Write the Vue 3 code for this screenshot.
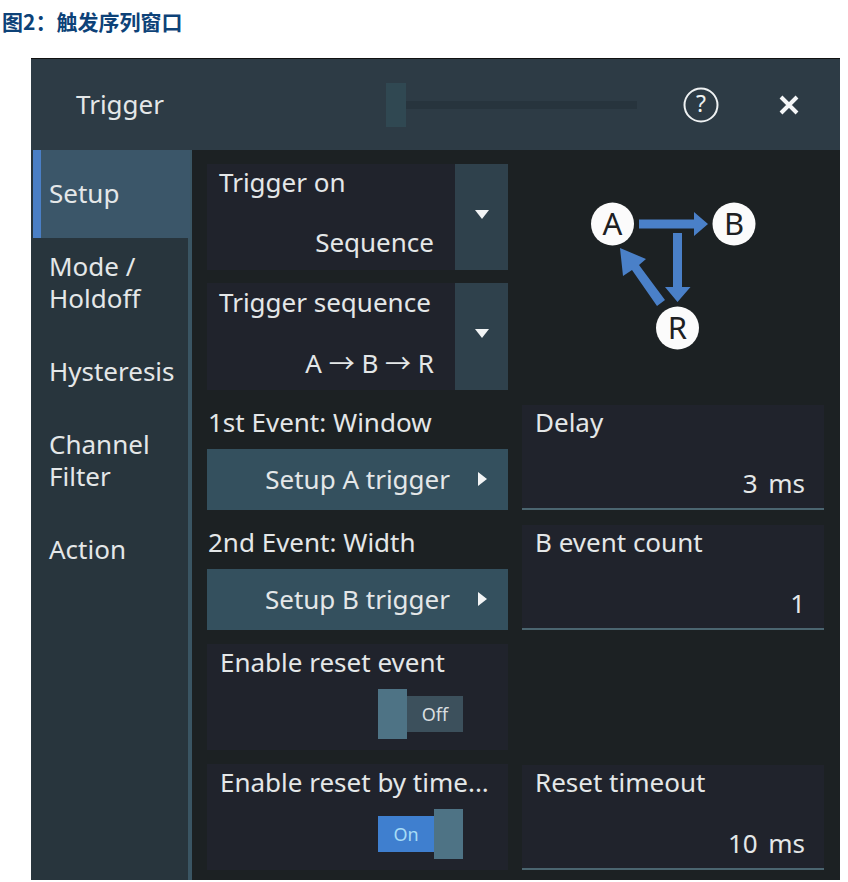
<template>
  <div class="page">
    <div class="caption">图2：触发序列窗口</div>
    <div class="window">
      <div class="header">
        <div class="title">Trigger</div>
        <div class="slider">
          <div class="slider_thumb"></div>
          <div class="slider_track"></div>
        </div>
        <svg class="help" width="36" height="36" viewBox="0 0 36 36">
          <circle cx="18" cy="18" r="16.5" fill="none" stroke="#eef1f2" stroke-width="2" />
          <text x="18" y="25" text-anchor="middle" class="help_mark">?</text>
        </svg>
        <svg class="close" width="22" height="22" viewBox="0 0 22 22">
          <path d="M3 3 L19 19 M19 3 L3 19" stroke="#f4f6f7" stroke-width="4" fill="none" />
        </svg>
      </div>
      <div class="content">
        <div class="sidebar">
          <div v-for="item in menu" :key="item" class="menu_item" :class="{ active: item === 'Setup' }">{{ item }}</div>
        </div>
        <div class="main">
          <div class="column">
            <div class="select first">
              <div class="select_text">
                <div class="label">Trigger on</div>
                <div class="value">Sequence</div>
              </div>
              <div class="select_btn"><span class="tri_down"></span></div>
            </div>
            <div class="select second">
              <div class="select_text">
                <div class="label">Trigger sequence</div>
                <div class="value">A → B → R</div>
              </div>
              <div class="select_btn"><span class="tri_down"></span></div>
            </div>
            <div class="event_label">1st Event: Window</div>
            <div class="action_btn">Setup A trigger<span class="tri_right"></span></div>
            <div class="event_label">2nd Event: Width</div>
            <div class="action_btn">Setup B trigger<span class="tri_right"></span></div>
            <div class="toggle_card">
              <div class="label">Enable reset event</div>
              <div class="toggle off">
                <div class="thumb"></div>
                <div class="track">Off</div>
              </div>
            </div>
            <div class="toggle_card">
              <div class="label">Enable reset by time...</div>
              <div class="toggle on">
                <div class="track">On</div>
                <div class="thumb"></div>
              </div>
            </div>
          </div>
          <div class="column right">
            <svg class="diagram" width="302" height="226" viewBox="522 164 302 226">
              <g fill="#4a80c8">
                <path d="M639 219.500 H694 V212 L708 224 L694 236 V228.500 H639 Z" />
                <path d="M673 233 H682 V287 H690.500 L677.500 302 L665 287 H673 Z" />
                <path d="M665 300 L657 306 L632 270 L623 276 L620 248 L646 259 L639 265 Z" />
              </g>
              <g v-for="n in nodes" :key="n.name">
                <circle :cx="n.x" :cy="n.y" r="21.500" fill="#fbfbfb" />
                <text :x="n.x" :y="n.y + 11" text-anchor="middle" class="node_text">{{ n.name }}</text>
              </g>
            </svg>
            <div class="field">
              <div class="label">Delay</div>
              <div class="value">3&nbsp; ms</div>
            </div>
            <div class="field">
              <div class="label">B event count</div>
              <div class="value">1</div>
            </div>
            <div class="field timeout">
              <div class="label">Reset timeout</div>
              <div class="value">10&nbsp; ms</div>
            </div>
          </div>
        </div>
      </div>
    </div>
  </div>
</template>

<script setup>
const menu = ["Setup", "Mode /\nHoldoff", "Hysteresis", "Channel\nFilter", "Action"];

const nodes = [
  { name: "A", x: 612.5, y: 224 },
  { name: "B", x: 734, y: 224 },
  { name: "R", x: 677.5, y: 328 }
];
</script>

<style>
html, body {
  margin: 0;
  background: #fff;
}
</style>

<style scoped>
.page {
  width: 848px;
  height: 882px;
  overflow: hidden;
  font-family: "Noto Sans", "Noto Sans CJK SC", sans-serif;
  box-sizing: border-box;
  padding-top: 9px;
}

.caption {
  height: 49px;
  padding-left: 2px;
  font-size: 21px;
  line-height: 24px;
  font-weight: 700;
  color: #0d4278;
  font-family: "Noto Sans CJK SC", sans-serif;
}

.window {
  width: 809px;
  height: 822px;
  margin-left: 31px;
  background: #1c2123;
  border-top: 1px solid #111;
  box-sizing: border-box;
  color: #e4e7e8;
  font-size: 26px;
  line-height: 32px;
}

.header {
  height: 91px;
  display: flex;
  align-items: center;
  background: #2d3b45;
}

.title {
  width: 355px;
  padding: 0 0 2px 45px;
  box-sizing: border-box;
}

.slider {
  width: 251px;
  height: 44px;
  display: flex;
  align-items: center;
}

.slider_thumb {
  width: 20px;
  height: 44px;
  background: #304852;
}

.slider_track {
  flex: 1;
  height: 8px;
  background: #27343d;
}

.help {
  margin-left: 46px;
}

.close {
  margin-left: 59px;
}

.content {
  display: flex;
  height: 730px;
}

.sidebar {
  width: 161px;
  flex-shrink: 0;
  box-sizing: border-box;
  background: #28353d;
  border-right: 4px solid #3a5563;
}

.menu_item {
  height: 89px;
  display: flex;
  align-items: center;
  padding: 0 0 2px 18px;
  white-space: pre-line;
  box-sizing: border-box;
}

.menu_item.active {
  height: 88px;
  margin-left: 2px;
  margin-right: -2px;
  padding-left: 8px;
  border-left: 8px solid #4a7fc6;
  background: #3b5669;
}

.main {
  flex: 1;
  display: flex;
  gap: 14px;
  padding: 14px 0 0 15px;
}

.column {
  width: 301px;
  display: flex;
  flex-direction: column;
}

.column.right {
  width: 302px;
}

.select {
  display: flex;
  height: 106px;
}

.second {
  height: 107px;
  margin-top: 13px;
}

.select_text {
  flex: 1;
  background: #20232c;
  padding: 2px 21px 0 12px;
  display: flex;
  flex-direction: column;
  justify-content: flex-start;
}

.second .select_text {
  padding-top: 3px;
}

.label {
  height: 32px;
  white-space: nowrap;
}

.select_text .value {
  margin-top: 28px;
  text-align: right;
}

.second .select_text .value {
  margin-top: 29px;
}

.select_btn {
  width: 53px;
  background: #2f414c;
  display: flex;
  align-items: center;
  justify-content: center;
  padding-bottom: 6px;
  box-sizing: border-box;
}

.tri_down {
  width: 0;
  height: 0;
  border-left: 7px solid transparent;
  border-right: 7px solid transparent;
  border-top: 9px solid #f2f4f5;
}

.tri_right {
  display: inline-block;
  width: 0;
  height: 0;
  margin-left: 28px;
  border-top: 7px solid transparent;
  border-bottom: 7px solid transparent;
  border-left: 9px solid #f2f4f5;
}

.event_label {
  height: 59px;
  box-sizing: border-box;
  padding-top: 16px;
  padding-left: 1px;
}

.action_btn {
  height: 61px;
  box-sizing: border-box;
  padding: 0 21px 2px 0;
  display: flex;
  align-items: center;
  justify-content: flex-end;
  background: #34505e;
}

.toggle_card {
  height: 106px;
  margin-top: 14px;
  box-sizing: border-box;
  padding: 2px 0 0 13px;
  background: #20232c;
}

.toggle {
  display: flex;
  align-items: center;
  width: 85px;
  height: 50px;
  margin: 11px 0 0 158px;
  font-size: 18px;
  line-height: 24px;
}

.thumb {
  width: 29px;
  height: 50px;
  flex-shrink: 0;
  background: #4e7385;
}

.track {
  flex: 1;
  height: 36px;
  display: flex;
  align-items: center;
  justify-content: center;
}

.off .track {
  background: #3c505c;
  color: #d9dee0;
}

.on .track {
  background: #3f7fcf;
  color: #a6dcf6;
}

.diagram {
  display: block;
  flex-shrink: 0;
}

.node_text {
  font-size: 31px;
  fill: #1d2022;
}

.help_mark {
  font-size: 23px;
  fill: #eef1f2;
}

.field {
  height: 105px;
  margin-top: 15px;
  box-sizing: border-box;
  padding: 1px 19px 0 13px;
  background: #20232c;
  border-bottom: 2px solid #4b6570;
}

.field .value {
  margin-top: 29px;
  text-align: right;
  word-spacing: -1.5px;
}

.timeout {
  margin-top: 135px;
}
</style>
